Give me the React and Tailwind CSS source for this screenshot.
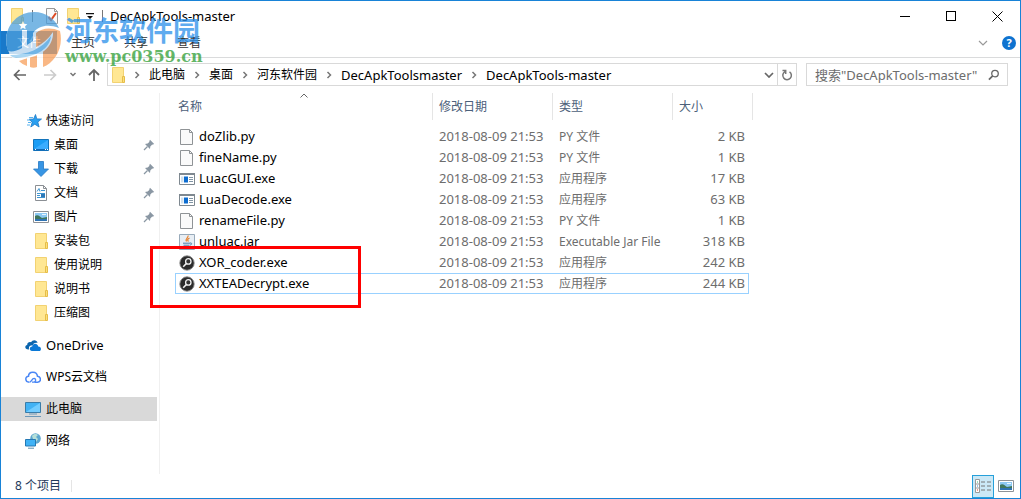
import React, { useState } from 'react';

const QUICK_ACCESS = [
  { name: '桌面', icon: 'desktop', pinned: true },
  { name: '下载', icon: 'download', pinned: true },
  { name: '文档', icon: 'document', pinned: true },
  { name: '图片', icon: 'picture', pinned: true },
  { name: '安装包', icon: 'folder' },
  { name: '使用说明', icon: 'folder' },
  { name: '说明书', icon: 'folder' },
  { name: '压缩图', icon: 'folder' }
];

const PLACES = [
  { name: 'OneDrive', icon: 'onedrive', latin: true },
  { name: 'WPS云文档', icon: 'wps' },
  { name: '此电脑', icon: 'computer' },
  { name: '网络', icon: 'network' }
];

const PATH = [
  { name: '此电脑' },
  { name: '桌面' },
  { name: '河东软件园' },
  { name: 'DecApkToolsmaster', latin: true },
  { name: 'DecApkTools-master', latin: true }
];

const FILES = [
  { name: 'doZlib.py', icon: 'file', type: 'PY 文件', size: '2 KB' },
  { name: 'fineName.py', icon: 'file', type: 'PY 文件', size: '1 KB' },
  { name: 'LuacGUI.exe', icon: 'exe', type: '应用程序', size: '17 KB' },
  { name: 'LuaDecode.exe', icon: 'exe', type: '应用程序', size: '63 KB' },
  { name: 'renameFile.py', icon: 'file', type: 'PY 文件', size: '1 KB' },
  { name: 'unluac.jar', icon: 'jar', type: 'Executable Jar File', size: '318 KB' },
  { name: 'XOR_coder.exe', icon: 'key', type: '应用程序', size: '242 KB' },
  { name: 'XXTEADecrypt.exe', icon: 'key', type: '应用程序', size: '244 KB' }
];

// 16x16 drawings, one per kind of item
const GLYPHS = {
  folder: (
    <>
      <path d="M2.5.5h11v15h-11z" fill="#ffe793" stroke="#f2d272" />
      <path d="M12.500 9.500h2v6h-2z" fill="#fbdf7c" stroke="#e6bd48" />
    </>
  ),
  desktop: (
    <>
      <path d="M.5 2.500h15v11H.5z" fill="#1b9df5" stroke="#1374bb" />
      <path d="M1 12l14-9v9z" fill="#3badff" />
      <path d="M1 12h14v1.500H1z" fill="#1169b5" />
      <path d="M2 12.500h1M12 12.500h1M14 12.500h1" stroke="#fff" />
    </>
  ),
  download: <path d="M5.500.5h5V8h5L8 15.500.5 8h5z" fill="#3795e4" stroke="#2479c4" strokeWidth=".8" />,
  document: (
    <>
      <path d="M2.500.5h8l3 3v12h-11z" fill="#fff" stroke="#8b8f94" />
      <path d="M10.500.5v3h3" fill="none" stroke="#8b8f94" />
      <path d="M4 6.500l2-3 1 3M8 5.500h4M4 8.500h8M9 10.500h3M4 10.500h3M4 12.500h8" fill="none" stroke="#3f95d0" />
      <path d="M8 9h4v3H8z" fill="#2e78b7" />
    </>
  ),
  picture: (
    <>
      <path d="M.5 2.500h15v11H.5z" fill="#fff" stroke="#8e9297" />
      <path d="M2 4h12v8H2z" fill="#8dc9f3" />
      <path d="M2 7c3-2 5 1 7 2l5-1v2H2z" fill="#3f765c" />
      <path d="M2 10h12v2H2z" fill="#2f73b3" />
      <path d="M9 5h4v1H9z" fill="#e9f6ff" />
    </>
  ),
  onedrive: (
    <>
      <path d="M4 12.500C-.5 12.800-.7 8.500 2.200 7.900 2 5.500 4.700 4.300 6 5.300c1.500-3.200 6-2.600 6.600.5-3-.6-4.500.8-4.900 2.500C4.600 8.300 3.500 10 4 12.500z" fill="#0a64ad" />
      <path d="M7 14c-3-.2-3-4.300.2-4.500.3-3.500 5.300-3.700 6 0C16.700 9.400 16.700 14 14 14z" fill="#0a78d6" />
    </>
  ),
  wps: (
    <>
      <path d="M4.300 13.200C-.2 13-.2 7.500 3.500 7.300c0-5.200 8.300-5.700 9 0 4 .3 3.800 5.900.2 5.900H9.500" fill="none" stroke="#4a87f5" strokeWidth="1.500" />
      <path d="M4.500 13.200c2.300 0 2-3.800 4.600-3.800 2 0 2.200 3.800-.4 3.800H7" fill="none" stroke="#4a87f5" strokeWidth="1.300" />
    </>
  ),
  computer: (
    <>
      <path d="M.5 1.500h15v10H.5z" fill="#42b2f4" stroke="#3a7ca8" />
      <path d="M1 11l14-9v9z" fill="#72ccff" />
      <path d="M4 13h8M0 15.500h16" stroke="#6c98b8" />
    </>
  ),
  network: (
    <>
      <circle cx="10.500" cy="5.500" r="5.300" fill="#5da7cf" />
      <path d="M7 3c2-3 5-2 6-1l-2 2 2 2-2 3-3-3z" fill="#b5dfd8" />
      <path d="M.5 6.500h10v6.500H.5z" fill="#3fb2f6" stroke="#2578b3" />
      <path d="M3 15.200h6" stroke="#5e8ead" />
    </>
  ),
  file: (
    <>
      <path d="M1.500.5h9l3 3v12h-12z" fill="#fafafa" stroke="#8f9396" />
      <path d="M10.500.5v3h3" fill="none" stroke="#8f9396" />
    </>
  ),
  exe: (
    <>
      <path d="M.5 2.500h15v11H.5z" fill="#fff" stroke="#7e8890" />
      <path d="M0 2h16v2H0z" fill="#7e8890" />
      <path d="M2 5.500h2.500v6H2z" fill="#cfe0ee" />
      <path d="M5 5.500h4v6H5z" fill="#0c6cd0" />
      <path d="M10 6.500h4M10 8.500h4M10 10.500h4" stroke="#8094a4" />
    </>
  ),
  jar: (
    <>
      <path d="M.5.5h15v15H.5z" fill="#e8eef4" stroke="#98aaba" />
      <path d="M9 1.500c1 2-3.500 3-1.500 6M10.500 4c-2 1-2.500 2-1 3.500" fill="none" stroke="#e6812d" strokeWidth="1.200" />
      <path d="M4 9.200h7M4.500 11.200h6M3 13.200h9M11 9c2.500-.5 2 2 0 2" fill="none" stroke="#4d7fa8" />
    </>
  ),
  key: (
    <>
      <circle cx="8" cy="8" r="7.200" fill="#2b2b2b" stroke="#8a8a8a" strokeWidth=".9" />
      <circle cx="9.300" cy="6.400" r="2.700" fill="#333" stroke="#f2f2f2" strokeWidth="1.300" />
      <path d="M7.400 8.500L4.200 11.800" stroke="#f2f2f2" strokeWidth="1.600" />
    </>
  )
};

const Glyph = ({ name, className = '' }) => (
  <svg viewBox="0 0 16 16" className={`size-4 shrink-0 ${className}`} aria-hidden="true">
    {GLYPHS[name]}
  </svg>
);

const Chevron = () => (
  <svg viewBox="0 0 6 8" className="w-[6px] h-2 shrink-0" aria-hidden="true">
    <path d="M1.500 1L4.500 4 1.500 7" fill="none" stroke="#777" strokeWidth="1.500" />
  </svg>
);

const TitleBar = () => (
  <header className="flex items-center h-[30px] pl-2">
    <Glyph name="folder" />
    <span className="w-px h-3 ml-[7px] mr-3 bg-[#777]" />
    <svg viewBox="0 0 14 18" className="w-[14px] h-[18px]" aria-hidden="true">
      <path d="M1.500 1.500h8l3 3v12h-11z" fill="#fafafa" stroke="#999" />
      <path d="M9.500 1.500v3h3" fill="none" stroke="#999" />
      <path d="M3.500 10l2.500 3 5-7" fill="none" stroke="#dc4a22" strokeWidth="2" />
    </svg>
    <Glyph name="folder" className="ml-[6px]" />
    <svg viewBox="0 0 8 8" className="size-2 ml-[5px]" aria-hidden="true">
      <path d="M0 1h8v1.200H0zM1 4h6L4 7z" fill="#111" />
    </svg>
    <span className="w-px h-3 ml-2 mr-[7px] bg-[#777]" />
    <h1 className="grow text-[13px]">DecApkTools-master</h1>
    <button aria-label="最小化" className="flex items-center justify-center w-[46px] h-full">
      <span className="w-[10px] h-px bg-black" />
    </button>
    <button aria-label="最大化" className="flex items-center justify-center w-[46px] h-full">
      <span className="size-[10px] border border-black" />
    </button>
    <button aria-label="关闭" className="flex items-center justify-center w-[46px] h-full">
      <svg viewBox="0 0 11 11" className="size-[11px]" aria-hidden="true">
        <path d="M.5.5l10 10M10.500.5l-10 10" stroke="#000" />
      </svg>
    </button>
  </header>
);

const Ribbon = () => (
  <nav className="flex items-center h-[27px] pb-[3px] border-b border-[#dadbdc] text-[#333]">
    <button className="w-14 h-full bg-[#1979ca] text-white">文件</button>
    <button className="w-[52px] h-full">主页</button>
    <button className="w-[54px] h-full">共享</button>
    <button className="w-[52px] h-full">查看</button>
    <button aria-label="展开功能区" className="ml-auto mr-[14px]">
      <svg viewBox="0 0 10 6" className="w-[10px] h-[6px]" aria-hidden="true">
        <path d="M1 1l4 4 4-4" fill="none" stroke="#999" strokeWidth="1.200" />
      </svg>
    </button>
    <button aria-label="帮助" className="size-[14px] mr-1 rounded-full bg-[#0f73d0] text-white text-[11px] leading-[14px] font-bold">
      ?
    </button>
  </nav>
);

const AddressRow = () => {
  const [query, setQuery] = useState('');

  return (
    <div className="flex items-center h-[34px] pb-px px-3">
      <button aria-label="后退">
        <svg viewBox="0 0 14 12" className="w-[14px] h-3" aria-hidden="true">
          <path d="M13 6H2M6.500 1L1.500 6l5 5" fill="none" stroke="#666" strokeWidth="1.700" />
        </svg>
      </button>
      <button aria-label="前进" className="ml-4">
        <svg viewBox="0 0 14 12" className="w-[14px] h-3" aria-hidden="true">
          <path d="M1 6h11M7.500 1l5 5-5 5" fill="none" stroke="#ccc" strokeWidth="1.700" />
        </svg>
      </button>
      <button aria-label="最近位置" className="ml-3">
        <svg viewBox="0 0 8 6" className="w-2 h-[6px]" aria-hidden="true">
          <path d="M1.500 1L4 3.500 6.500 1" fill="none" stroke="#777" strokeWidth="1.500" />
        </svg>
      </button>
      <button aria-label="上移" className="ml-[10px]">
        <svg viewBox="0 0 14 14" className="size-[14px]" aria-hidden="true">
          <path d="M7 13V2M2 7l5-5 5 5" fill="none" stroke="#666" strokeWidth="1.800" />
        </svg>
      </button>

      <div className="flex items-center grow h-[23px] ml-[6px] pl-[2px] border border-[#d9d9d9]">
        <Glyph name="folder" />
        <span className="ml-2"><Chevron /></span>
        <ol className="flex items-center ml-[9px] gap-[9px]">
          {PATH.map((part, index) => (
            <li key={part.name} className="flex items-center gap-[9px]">
              {index > 0 && <Chevron />}
              <a href="#" className={part.latin ? 'text-[13px]' : 'text-[12px]'}>{part.name}</a>
            </li>
          ))}
        </ol>
        <button aria-label="历史记录" className="ml-auto mr-[3px]">
          <svg viewBox="0 0 10 6" className="w-[10px] h-[6px]" aria-hidden="true">
            <path d="M1 1l4 4 4-4" fill="none" stroke="#666" strokeWidth="1.700" />
          </svg>
        </button>
        <button aria-label="刷新" className="flex items-center justify-center w-[19px] h-full border-l border-[#d9d9d9]">
          <svg viewBox="0 0 12 12" className="size-3" aria-hidden="true">
            <path d="M8.500 2.800A4.300 4.300 0 1 1 4 2.600M1.500 1.500h3.200v3.500" fill="none" stroke="#777" strokeWidth="1.500" />
          </svg>
        </button>
      </div>

      <label className="flex items-center w-[202px] h-[23px] ml-[9px] px-2 border border-[#d9d9d9]">
        <input
          type="text"
          aria-label="搜索"
          placeholder='搜索"DecApkTools-master"'
          value={query}
          onChange={(e) => setQuery(e.target.value)}
          className="grow min-w-0 text-[13px] outline-none placeholder:text-[#6d6d6d]"
        />
        <svg viewBox="0 0 12 12" className="size-3" aria-hidden="true">
          <circle cx="7.500" cy="4.500" r="3.500" fill="none" stroke="#666" strokeWidth="1.400" />
          <path d="M5 7L1 11" stroke="#666" strokeWidth="1.800" />
        </svg>
      </label>
    </div>
  );
};

const Sidebar = ({ active, onSelect }) => (
  <aside className="w-[159px] shrink-0 pt-4 pr-[2px] border-r border-[#f0f0f0]">
    <div className="flex items-center h-6 pl-[25px] gap-1">
      <svg viewBox="0 0 16 16" className="size-4" aria-hidden="true">
        <path d="M9.500 1.500l1.300 4.400 4.700.1-3.700 3 1.300 5-4.300-2.800L4.800 14l1.400-4.800L3 6.200l4.600-.2z" fill="#299ff0" stroke="#1c78c6" strokeWidth=".8" />
        <path d="M3 4.500h4M1 7h3M2 9.500h3M1 12h3" stroke="#55b1ee" />
      </svg>
      <h2>快速访问</h2>
    </div>
    <ul>
      {QUICK_ACCESS.map(item => (
        <li key={item.name}>
          <button
            onClick={() => onSelect(item.name)}
            className={`flex items-center w-full h-6 pl-8 pr-[2px] gap-[5px] ${active === item.name ? 'bg-[#d9d9d9]' : ''}`}
          >
            <Glyph name={item.icon} />
            <span>{item.name}</span>
            {item.pinned && (
              <svg viewBox="0 0 12 12" className="size-3 ml-auto" aria-hidden="true">
                <path d="M7 .8L11.200 5l-1.200.6-1 .1L7.300 7.600 7 10 2 5l2.600-.4L6.300 3l.1-1z" fill="#8a97a3" />
                <path d="M4.500 7.500L1 11" stroke="#8a97a3" strokeWidth="1.200" />
              </svg>
            )}
          </button>
        </li>
      ))}
    </ul>
    <ul className="flex flex-col gap-2 pt-2">
      {PLACES.map(item => (
        <li key={item.name}>
          <button
            onClick={() => onSelect(item.name)}
            className={`flex items-center w-full h-6 pl-6 gap-[5px] ${active === item.name ? 'bg-[#d9d9d9]' : ''}`}
          >
            <Glyph name={item.icon} />
            <span className={item.latin ? 'text-[13px]' : 'text-[12px]'}>{item.name}</span>
          </button>
        </li>
      ))}
    </ul>
  </aside>
);

const FileTable = ({ selected, onSelect }) => (
  <main className="relative grow pl-[15px]">
    <table className="table-fixed w-[578px] border-separate border-spacing-0 text-left">
      <colgroup>
        <col className="w-[258px]" />
        <col className="w-[120px]" />
        <col className="w-[120px]" />
        <col className="w-[76px]" />
        <col className="w-1" />
      </colgroup>
      <thead>
        <tr className="h-[27px] text-[#4c607a]">
          <th className="relative pl-[3px] border-r border-[#e5e5e5] font-normal">
            名称
            <svg viewBox="0 0 8 5" className="absolute top-0 left-1/2 -translate-x-1/2 w-2 h-[5px]" aria-hidden="true">
              <path d="M.5 4.500L4 1l3.500 3.500" fill="none" stroke="#666" />
            </svg>
          </th>
          <th className="pl-[6px] border-r border-[#e5e5e5] font-normal">修改日期</th>
          <th className="pl-[6px] border-r border-[#e5e5e5] font-normal">类型</th>
          <th colSpan={2} className="pl-[6px] border-r border-[#e5e5e5] font-normal">大小</th>
        </tr>
      </thead>
      <tbody>
        <tr className="h-[6px]"><td colSpan={5} /></tr>
        {FILES.map(file => {
          const edge = selected === file.name ? 'border-[#99d1ff]' : 'border-transparent';
          return (
            <tr key={file.name} onClick={() => onSelect(file.name)} className="h-[21px] text-[#6d6d6d]">
              <td className={`pl-[3px] border-y border-l ${edge}`}>
                <span className="flex items-center gap-1 text-[13px] leading-[19px] text-black">
                  <Glyph name={file.icon} />
                  {file.name}
                </span>
              </td>
              <td className={`pl-[6px] border-y text-[13px] leading-[19px] whitespace-nowrap ${edge}`}>2018-08-09 21:53</td>
              <td className={`pl-[6px] border-y leading-[19px] whitespace-nowrap ${edge}`}>{file.type}</td>
              <td className={`pr-[3px] border-y border-r text-right text-[13px] leading-[19px] ${edge}`}>{file.size}</td>
              <td />
            </tr>
          );
        })}
      </tbody>
    </table>
    {/* Highlight frame around the two decrypt tools */}
    <div className="absolute top-[153px] -left-[10px] w-[211px] h-[62px] border-3 border-[#ff0000] pointer-events-none" />
  </main>
);

const StatusBar = () => (
  <footer className="flex items-center h-6 pl-[14px] pr-[6px] text-[#1e395b]">
    <span>8 个项目</span>
    <span className="w-px h-3 ml-[10px] bg-[#e5e5e5]" />
    <button aria-label="详细信息" className="flex items-center justify-center w-[22px] h-[23px] ml-auto border border-[#26a0da] bg-[#cbe8f6]">
      <svg viewBox="0 0 16 14" className="w-4 h-[14px]" aria-hidden="true">
        <path d="M.5.5h4v13h-4zM.5 5h4M.5 9h4" fill="#fff" stroke="#999" />
        <path d="M6 3h4M12 3h4M6 7h4M12 7h4M6 11h4M12 11h4" stroke="#777" />
        <path d="M2 2.500h1v1H2z" fill="#3b7" />
        <path d="M2 6.500h1v1H2z" fill="#38c" />
        <path d="M2 10.500h1v1H2z" fill="#d31" />
      </svg>
    </button>
    <button aria-label="大图标" className="ml-1">
      <Glyph name="picture" />
    </button>
  </footer>
);

const Watermark = () => (
  <div className="absolute top-2 left-1 flex items-center gap-[2px] opacity-75 pointer-events-none">
    <svg viewBox="0 0 58 60" className="w-[58px] h-[60px]" aria-hidden="true">
      <circle cx="29" cy="31" r="28" fill="#fff" />
      {/* blue crest with the tower cut out of it */}
      <path d="M3 42C-4 20 11 3 29 3c12 0 21 7 25 16-10-4-20-3-26 5v8l-6 4V21h-5v18C12 42 7 43 3 42z" fill="#4d9fdc" />
      <path d="M31 24c6-5 15-6 24-2 4 18-6 32-17 36V37c-2 2-4 4-7 5z" fill="#f7a05c" />
      <path d="M14 52c3-1 6-2 8-3v8c-3-1-6-3-8-5zM25 47c2-1 5-2 7-4v15c-2 1-5 1-7 0z" fill="#f7a05c" />
      <path d="M4 44c17 1 34-6 44-21 1 15-14 28-38 27-3-2-5-4-6-6z" fill="#fff" />
      <path d="M5 46c17 0 32-6 41-19-1 12-13 21-35 22-3-1-4-1-6-3z" fill="#8fcaf0" />
      <path d="M18 12l1.300 2.800 3 .4-2.200 2 .5 3-2.600-1.500-2.600 1.500.5-3-2.200-2 3-.4z" fill="#fff" />
    </svg>
    <div className="pt-1 font-bold">
      <p className="text-[27px] leading-8 text-[#2a90ea]">河东软件园</p>
      <p className="font-['DejaVu_Serif','Noto_Sans_CJK_SC',serif] text-[16px] leading-5 text-[#2f9e35]">www.pc0359.cn</p>
    </div>
  </div>
);

const App = () => {
  const [place, setPlace] = useState('此电脑');
  const [selected, setSelected] = useState('XXTEADecrypt.exe');

  return (
    <div className="relative flex flex-col min-h-screen border border-[#1883d7] bg-white font-['Noto_Sans','Noto_Sans_CJK_SC',sans-serif] text-[12px] leading-4 text-black">
      <TitleBar />
      <Ribbon />
      <AddressRow />
      <div className="flex grow pt-px">
        <Sidebar active={place} onSelect={setPlace} />
        <FileTable selected={selected} onSelect={setSelected} />
      </div>
      <StatusBar />
      <Watermark />
    </div>
  );
};

export default App;
